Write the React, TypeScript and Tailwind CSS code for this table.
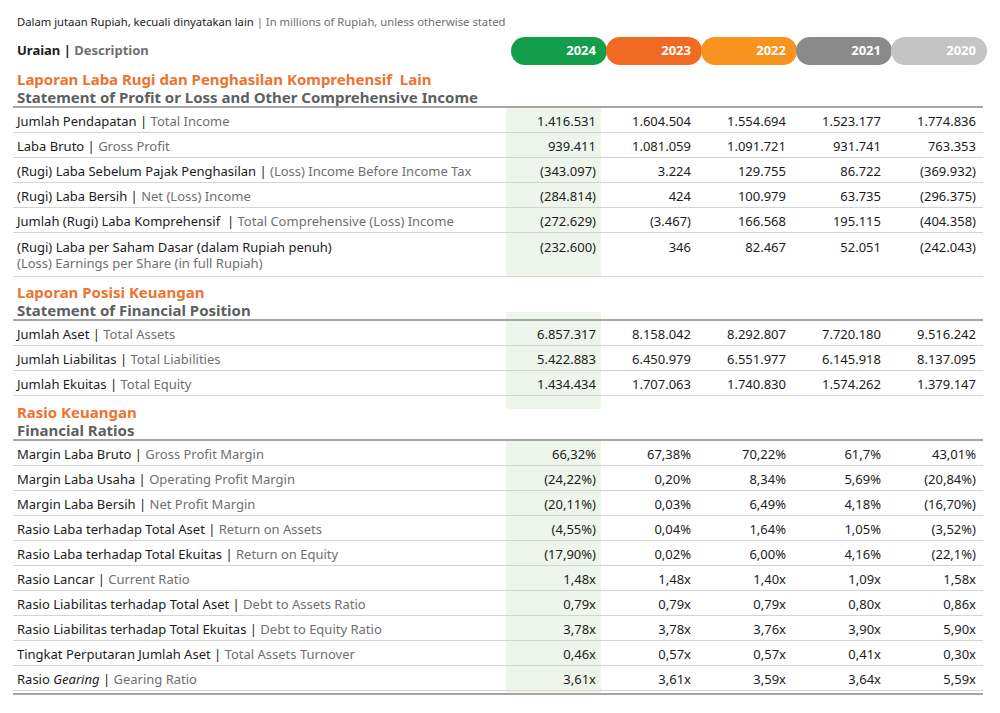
type Row = { id: React.ReactNode; en: string; v: string[]; tall?: boolean };

const years = [
  { y: "2024", bg: "bg-[#129e4a]" },
  { y: "2023", bg: "bg-[#f06a24]" },
  { y: "2022", bg: "bg-[#f7931e]" },
  { y: "2021", bg: "bg-[#8a8a8a]" },
  { y: "2020", bg: "bg-[#c4c4c4]" },
];

const incomeRows: Row[] = [
  { id: "Jumlah Pendapatan", en: "Total Income", v: ["1.416.531", "1.604.504", "1.554.694", "1.523.177", "1.774.836"] },
  { id: "Laba Bruto", en: "Gross Profit", v: ["939.411", "1.081.059", "1.091.721", "931.741", "763.353"] },
  { id: "(Rugi) Laba Sebelum Pajak Penghasilan", en: "(Loss) Income Before Income Tax", v: ["(343.097)", "3.224", "129.755", "86.722", "(369.932)"] },
  { id: "(Rugi) Laba Bersih", en: "Net (Loss) Income", v: ["(284.814)", "424", "100.979", "63.735", "(296.375)"] },
  { id: "Jumlah (Rugi) Laba Komprehensif\u00a0", en: "Total Comprehensive (Loss) Income", v: ["(272.629)", "(3.467)", "166.568", "195.115", "(404.358)"] },
  { id: "(Rugi) Laba per Saham Dasar (dalam Rupiah penuh)", en: "(Loss) Earnings per Share (in full Rupiah)", v: ["(232.600)", "346", "82.467", "52.051", "(242.043)"], tall: true },
];

const positionRows: Row[] = [
  { id: "Jumlah Aset", en: "Total Assets", v: ["6.857.317", "8.158.042", "8.292.807", "7.720.180", "9.516.242"] },
  { id: "Jumlah Liabilitas", en: "Total Liabilities", v: ["5.422.883", "6.450.979", "6.551.977", "6.145.918", "8.137.095"] },
  { id: "Jumlah Ekuitas", en: "Total Equity", v: ["1.434.434", "1.707.063", "1.740.830", "1.574.262", "1.379.147"] },
];

const ratioRows: Row[] = [
  { id: "Margin Laba Bruto", en: "Gross Profit Margin", v: ["66,32%", "67,38%", "70,22%", "61,7%", "43,01%"] },
  { id: "Margin Laba Usaha", en: "Operating Profit Margin", v: ["(24,22%)", "0,20%", "8,34%", "5,69%", "(20,84%)"] },
  { id: "Margin Laba Bersih", en: "Net Profit Margin", v: ["(20,11%)", "0,03%", "6,49%", "4,18%", "(16,70%)"] },
  { id: "Rasio Laba terhadap Total Aset", en: "Return on Assets", v: ["(4,55%)", "0,04%", "1,64%", "1,05%", "(3,52%)"] },
  { id: "Rasio Laba terhadap Total Ekuitas", en: "Return on Equity", v: ["(17,90%)", "0,02%", "6,00%", "4,16%", "(22,1%)"] },
  { id: "Rasio Lancar", en: "Current Ratio", v: ["1,48x", "1,48x", "1,40x", "1,09x", "1,58x"] },
  { id: "Rasio Liabilitas terhadap Total Aset", en: "Debt to Assets Ratio", v: ["0,79x", "0,79x", "0,79x", "0,80x", "0,86x"] },
  { id: "Rasio Liabilitas terhadap Total Ekuitas", en: "Debt to Equity Ratio", v: ["3,78x", "3,78x", "3,76x", "3,90x", "5,90x"] },
  { id: "Tingkat Perputaran Jumlah Aset", en: "Total Assets Turnover", v: ["0,46x", "0,57x", "0,57x", "0,41x", "0,30x"] },
  { id: <>Rasio <i>Gearing</i></>, en: "Gearing Ratio", v: ["3,61x", "3,61x", "3,59x", "3,64x", "5,59x"] },
];

const grid = "grid grid-cols-[493px_repeat(5,95px)]";

function SectionTitle({ id, en, pad, bandTop, bandBottom }: { id: string; en: string; pad: string; bandTop?: string; bandBottom?: string }) {
  return (
    <div className={`${grid} border-b-2 border-[#a6a6a6]`}>
      <div className={`pl-1 ${pad} whitespace-pre text-[15px] font-bold leading-[18px]`}>
        <div className="text-[#ee7330]">{id}</div>
        <div className="text-[#5e5f61]">{en}</div>
      </div>
      <div className="flex flex-col justify-between">
        <div className={bandTop ?? ""} />
        <div className={bandBottom ?? ""} />
      </div>
    </div>
  );
}

function DataRow({ r }: { r: Row }) {
  const h = r.tall ? "h-[43px] items-start pt-[6px] leading-[16px]" : "h-[24px] items-center pt-[2px] leading-[15px]";
  return (
    <div className={`${grid} border-b border-[#d4d4d4] text-[13px]`}>
      <div className={`flex ${h} pl-1`}>
        {r.tall ? (
          <div>
            <div className="text-[#1c1c1c]">{r.id}</div>
            <div className="text-[#6f6f6f]">{r.en}</div>
          </div>
        ) : (
          <div>
            <span className="text-[#1c1c1c]">{r.id} | </span>
            <span className="text-[#6f6f6f]">{r.en}</span>
          </div>
        )}
      </div>
      {r.v.map((v, i) => (
        <div
          key={i}
          className={`flex ${h} justify-end pr-[5px] text-[#1c1c1c] ${i === 0 ? "bg-[#eef5ea]" : ""}`}
        >
          {v}
        </div>
      ))}
    </div>
  );
}

export default function App() {
  return (
    <div className="h-[713px] w-[1000px] bg-white pl-[13px] pt-[14px] font-['Noto_Sans',sans-serif]">
      <div className="w-[970px]">
        <p className="pl-1 text-[11.25px] leading-4 text-[#1c1c1c]">
          Dalam jutaan Rupiah, kecuali dinyatakan lain <span className="text-[#6f6f6f]">| In millions of Rupiah, unless otherwise stated</span>
        </p>

        <div className={`${grid} mt-[7px] h-[28px] items-center`}>
          <div className="pl-1 text-[13px] font-bold">
            <span className="text-[#1c1c1c]">Uraian | </span>
            <span className="text-[#6f6f6f]">Description</span>
          </div>
          {years.map((y) => (
            <div key={y.y} className="h-[28px]">
              <div
                className={`ml-[5px] flex h-[28px] w-[96px] items-center justify-end rounded-full pr-[11px] text-[13px] font-bold text-white ${y.bg}`}
              >
                {y.y}
              </div>
            </div>
          ))}
        </div>

        <SectionTitle pad="pt-[5px]" id="Laporan Laba Rugi dan Penghasilan Komprehensif  Lain" en="Statement of Profit or Loss and Other Comprehensive Income" />
        {incomeRows.map((r, i) => (
          <DataRow key={i} r={r} />
        ))}

        <SectionTitle pad="pt-[6px]" id="Laporan Posisi Keuangan" en="Statement of Financial Position" bandBottom="h-[7px] bg-[#eef5ea]" />
        {positionRows.map((r, i) => (
          <DataRow key={i} r={r} />
        ))}

        <SectionTitle pad="pt-[7px]" id="Rasio Keuangan" en="Financial Ratios" bandTop="h-[13px] bg-[#eef5ea]" />
        {ratioRows.map((r, i) => (
          <DataRow key={i} r={r} />
        ))}
        <div className={grid}>
          <div className="h-[2px]" />
          <div className="h-[2px] bg-[#eef5ea]" />
        </div>
        <div className="border-t-2 border-[#a6a6a6]" />
      </div>
    </div>
  );
}
